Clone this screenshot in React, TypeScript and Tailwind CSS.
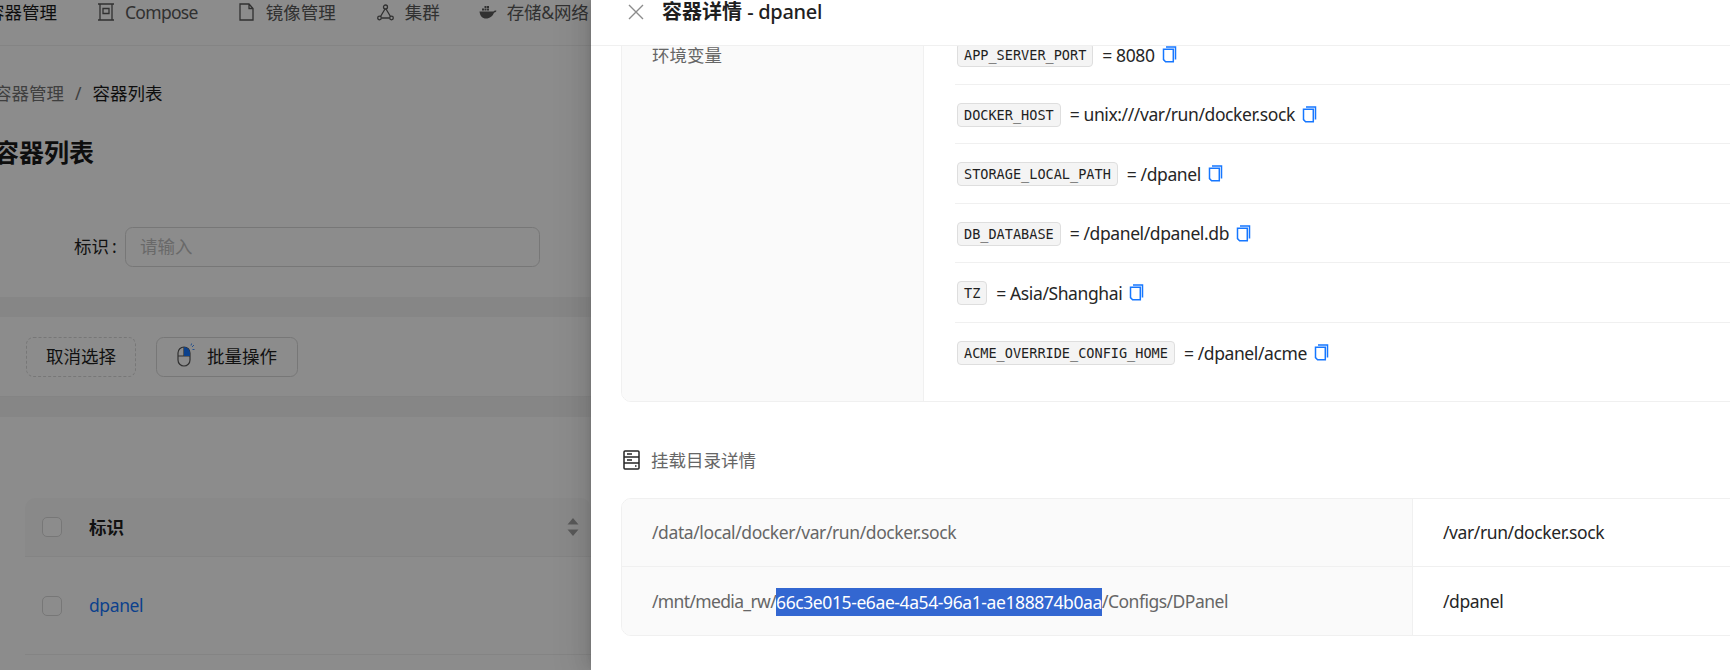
const cjk = `font-['Noto_Sans','Noto_Sans_CJK_SC',sans-serif]`;

const envRows = [
  { name: "APP_SERVER_PORT", value: "8080" },
  { name: "DOCKER_HOST", value: "unix:///var/run/docker.sock" },
  { name: "STORAGE_LOCAL_PATH", value: "/dpanel" },
  { name: "DB_DATABASE", value: "/dpanel/dpanel.db" },
  { name: "TZ", value: "Asia/Shanghai" },
  { name: "ACME_OVERRIDE_CONFIG_HOME", value: "/dpanel/acme" },
];

function CopyIcon() {
  return (
    <svg width="15" height="17" viewBox="0 0 15 17" fill="none" stroke="#1677ff" strokeWidth="1.5" className="ml-[7px] shrink-0">
      <path d="M4 1h9.500v12.500" />
      <path d="M1.500 3.200h9.800v12.600H3.600L1.500 13.600z" />
    </svg>
  );
}

function NavItem({ icon, label, className }: { icon?: React.ReactNode; label: string; className?: string }) {
  return (
    <div className={`flex items-center text-[#595959] text-[17.5px] ${className ?? ""}`}>
      {icon}
      <span>{label}</span>
    </div>
  );
}

function Checkbox() {
  return <div className="w-5 h-5 rounded-[5px] border border-[#d9d9d9] bg-white shrink-0" />;
}

function ContainerPage() {
  return (
    <div className="w-[591px] shrink-0 h-full overflow-hidden bg-[#f5f5f5] relative">
      <div className="h-[46px] bg-white border-b border-[#f0f0f0] flex items-start w-[640px] ml-[-13px]">
        <div className="flex items-center h-[24px]">
          <span className="text-[17.5px] text-[#1a1a1a]">容器管理</span>
          <NavItem
            className="ml-[40px] tracking-[-0.7px]"
            label="Compose"
            icon={
              <svg width="18" height="18" viewBox="0 0 18 18" fill="none" stroke="#595959" strokeWidth="1.3" className="mr-[10px]">
                <path d="M1 1h16M1 17h16M3 1v16M15 1v16M6 5.500h6v5H6z" />
              </svg>
            }
          />
          <NavItem
            className="ml-[41px]"
            label="镜像管理"
            icon={
              <svg width="15" height="18" viewBox="0 0 15 18" fill="none" stroke="#595959" strokeWidth="1.3" className="mr-[12px]">
                <path d="M1 1h9l4 4.500V17H1zM10 1v4.500h4" />
              </svg>
            }
          />
          <NavItem
            className="ml-[41px]"
            label="集群"
            icon={
              <svg width="17" height="17" viewBox="0 0 17 17" fill="none" stroke="#595959" strokeWidth="1.3" className="mr-[11px]">
                <circle cx="8.500" cy="3" r="2" />
                <circle cx="2.500" cy="14" r="1.800" />
                <circle cx="14.500" cy="14" r="1.800" />
                <path d="M8 5L3.500 12.500M9 5l4.500 7.500M4.500 14h8" />
              </svg>
            }
          />
          <NavItem
            className="ml-[39px] tracking-[-0.2px]"
            label="存储&网络"
            icon={
              <svg width="18" height="14" viewBox="0 0 18 14" fill="#595959" className="mr-[10px]">
                <path d="M0.500 6.500h14c.6-1 1.800-1.200 3-.8-.4 1.200-1.300 1.800-2.400 1.800C13.800 11 11 13.500 7 13.500c-3.600 0-6-2.400-6.500-7z" />
                <path d="M3 3.500h2v2H3zM5.500 3.500h2v2h-2zM8 3.500h2v2H8zM5.500 1h2v2h-2zM8 1h2v2H8z" />
              </svg>
            }
          />
        </div>
      </div>

      <div className="bg-white h-[150px] ml-[-6px]">
        <div className="pt-[35px] flex items-center text-[17.5px] h-[59px]">
          <span className="text-[#737373]">容器管理</span>
          <span className="text-[#737373] mx-[11px]">/</span>
          <span className="text-[#1a1a1a]">容器列表</span>
        </div>
        <div className="mt-[30px] text-[25px] leading-[34px] font-bold text-[#1a1a1a]">容器列表</div>
      </div>

      <div className="bg-white h-[101px] flex items-center pl-[74px]">
        <span className="text-[17.5px] text-[#1f1f1f] w-[51px] shrink-0">
          标识<span className="ml-[3px]">:</span>
        </span>
        <div className="w-[415px] h-[40px] rounded-[7.5px] border border-[#d9d9d9] flex items-center pl-[14px] text-[17.5px] text-[#bfbfbf]">
          请输入
        </div>
      </div>

      <div className="h-[20px]" />

      <div className="bg-white h-[80px] flex items-center pl-[26px] border-b border-[#f0f0f0]">
        <div className="w-[110px] h-[40px] rounded-[7.5px] border border-dashed border-[#d9d9d9] flex items-center justify-center text-[17.5px] text-[#1f1f1f]">
          取消选择
        </div>
        <div className="ml-[20px] w-[142px] h-[40px] rounded-[7.5px] border border-[#d9d9d9] flex items-center justify-center text-[17.5px] text-[#1f1f1f]">
          <svg width="18" height="24" viewBox="0 0 18 24" fill="none" className="mr-[12px] mb-[3px]">
            <rect x="1" y="4" width="12" height="19" rx="6" stroke="#595959" strokeWidth="1.2" />
            <path d="M1 13h12M7 4v9" stroke="#595959" strokeWidth="1.2" />
            <path d="M7 4a6 6 0 0 1 6 6v3H7z" fill="#1677ff" />
            <path d="M15 4l2-2M15.500 6.500h2M14 2.500l.6-2" stroke="#1677ff" strokeWidth=".8" />
          </svg>
          批量操作
        </div>
      </div>

      <div className="h-[20px]" />

      <div className="bg-white h-[260px] pl-[25px] pt-[81px]">
        <div className="h-[59px] bg-[#fafafa] rounded-t-[10px] border-b border-[#f0f0f0] flex items-center pl-[17px] relative">
          <Checkbox />
          <span className="ml-[27px] text-[17.5px] font-bold text-[#1f1f1f]">标识</span>
          <svg width="12" height="20" viewBox="0 0 12 20" fill="#a3a3a3" className="absolute left-[542px] top-[19px]">
            <path d="M6 1l5.500 6.500H.5zM6 19l5.500-6.500H.5z" />
          </svg>
        </div>
        <div className="h-[98px] border-b border-[#f0f0f0] flex items-center pl-[17px]">
          <Checkbox />
          <span className="ml-[27px] text-[17.5px] tracking-[-0.4px] text-[#1677ff]">dpanel</span>
        </div>
      </div>

      <div className="absolute inset-0 bg-black/45" />
    </div>
  );
}

function DetailPanel() {
  return (
    <div className="flex-1 min-w-0 h-full bg-white overflow-hidden flex flex-col relative z-10 shadow-[-6px_0_16px_0_rgba(0,0,0,0.08),-3px_0_6px_-4px_rgba(0,0,0,0.12),-9px_0_28px_8px_rgba(0,0,0,0.05)]">
      <div className="h-[46px] shrink-0 border-b border-[#f0f0f0] flex items-start pl-[37px] relative z-10 bg-white">
        <div className="flex items-center h-[24px]">
          <svg width="16" height="16" viewBox="0 0 16 16" stroke="#8c8c8c" strokeWidth="1.4" fill="none" className="mt-[-1px]">
            <path d="M1 1l14 14M15 1L1 15" />
          </svg>
          <span className="ml-[18px] text-[20px] text-[#1f1f1f] font-semibold">
            容器详情 <span className="font-medium tracking-[-0.3px]">- dpanel</span>
          </span>
        </div>
      </div>

      <div className="flex-1 min-h-0 pl-[30px]">
        <div className="mt-[-22px] w-[1160px] h-[378px] flex border border-[#f0f0f0] rounded-[10px] overflow-hidden">
          <div className="w-[302px] shrink-0 bg-[#fafafa] border-r border-[#f0f0f0] pl-[30px] pt-[18px] text-[17.5px] leading-[24px] text-[#666666]">
            环境变量
          </div>
          <div className="flex-1 pl-[31px]">
            {envRows.map((row, i) => (
              <div
                key={row.name}
                className={`h-[59.500px] flex items-center pl-[2px] pt-[1px] ${i < envRows.length - 1 ? "border-b border-[#f0f0f0]" : ""}`}
              >
                <code className="h-[24px] mt-[1px] px-[6px] flex items-center rounded-[4px] border border-[#dedede] bg-[#f4f4f4] font-['DejaVu_Sans_Mono',monospace] text-[13.55px] text-[#1f1f1f]">
                  {row.name}
                </code>
                <span className="ml-[9px] text-[17.5px] tracking-[-0.4px] text-[#262626]">= {row.value}</span>
                <CopyIcon />
              </div>
            ))}
          </div>
        </div>

        <div className="mt-[48px] h-[20px] flex items-center">
          <svg width="17" height="20" viewBox="0 0 17 20" fill="none" stroke="#262626" strokeWidth="1.5" className="ml-[2px]">
            <rect x="1" y="1" width="15" height="18" rx="1" />
            <path d="M1 7h15M1 13h15M4 4h5M4 10h5M12 16h1.500" />
          </svg>
          <span className="ml-[11px] text-[17.5px] text-[#666666]">挂载目录详情</span>
        </div>

        <div className="mt-[28px] w-[1160px] h-[138px] border border-[#f0f0f0] rounded-[10px] overflow-hidden text-[17.5px] tracking-[-0.4px]">
          <div className="flex h-[68px] border-b border-[#f0f0f0]">
            <div className="w-[791px] shrink-0 bg-[#fafafa] border-r border-[#f0f0f0] flex items-center pl-[30px] text-[#666666]">
              /data/local/docker/var/run/docker.sock
            </div>
            <div className="flex items-center pl-[30px] text-[#262626]">/var/run/docker.sock</div>
          </div>
          <div className="flex h-[69px]">
            <div className="w-[791px] shrink-0 bg-[#fafafa] border-r border-[#f0f0f0] flex items-center pl-[30px] text-[#666666]">
              <span className="tracking-[-0.65px]">/mnt/media_rw/</span>
              <span className="bg-[#3367d1] text-white h-[28px] leading-[28px]">66c3e015-e6ae-4a54-96a1-ae188874b0aa</span>
              <span className="tracking-[-0.5px]">/Configs/DPanel</span>
            </div>
            <div className="flex items-center pl-[30px] text-[#262626]">/dpanel</div>
          </div>
        </div>
      </div>
    </div>
  );
}

export default function App() {
  return (
    <div className={`flex w-[1730px] h-[670px] overflow-hidden bg-white ${cjk}`}>
      <ContainerPage />
      <DetailPanel />
    </div>
  );
}
